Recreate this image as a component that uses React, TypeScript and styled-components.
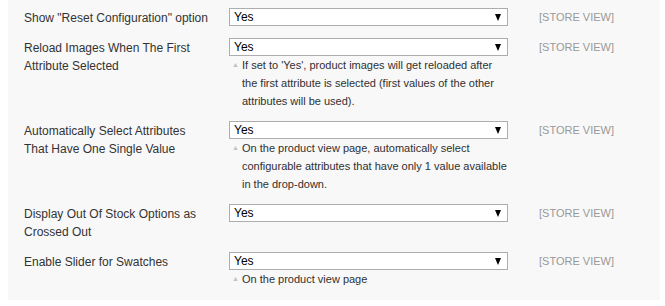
import React from 'react';
import styled, { createGlobalStyle } from 'styled-components';

const GlobalStyle = createGlobalStyle`
  html, body {
    margin: 0;
    padding: 0;
    background: #ffffff;
  }
  body {
    font-family: 'Liberation Sans', Arial, sans-serif;
  }
`;

const Panel = styled.div`
  margin-left: 8px;
  width: 652px;
  background: #f8f8f8;
  padding: 8px 0 12px 16px;
  box-sizing: border-box;
  display: flex;
  flex-direction: column;
  gap: 11px;
`;

const Row = styled.div`
  display: grid;
  grid-template-columns: 205px 279px auto;
  align-items: start;
`;

const Label = styled.div`
  font-size: 12px;
  line-height: 18px;
  color: #333333;
  padding: 1px 19px 0 0;
`;

const Field = styled.div`
  display: flex;
  flex-direction: column;
`;

const Select = styled.div`
  height: 18px;
  box-sizing: border-box;
  border: 1px solid #adadad;
  background: #ffffff;
  display: flex;
  align-items: center;
  justify-content: space-between;
  padding: 0 6px 0 4px;
  font-size: 12px;
  color: #000000;
`;

const Arrow = styled.span`
  width: 0;
  height: 0;
  border-left: 3.5px solid transparent;
  border-right: 3.5px solid transparent;
  border-top: 7px solid #000000;
`;

const Note = styled.div`
  display: flex;
  font-size: 11px;
  line-height: 18px;
  color: #303030;
  padding-left: 3px;
`;

const NoteMark = styled.span`
  flex: none;
  width: 10px;
  font-size: 7px;
  color: #c2c2c2;
`;

const NoteText = styled.span`
  flex: 1;
`;

const Scope = styled.div`
  margin-left: 31px;
  font-size: 11px;
  line-height: 18px;
  color: #999999;
`;

type Setting = {
  label: string;
  value: string;
  note?: string;
};

const settings: Setting[] = [
  { label: 'Show "Reset Configuration" option', value: 'Yes' },
  {
    label: 'Reload Images When The First Attribute Selected',
    value: 'Yes',
    note: "If set to 'Yes', product images will get reloaded after the first attribute is selected (first values of the other attributes will be used).",
  },
  {
    label: 'Automatically Select Attributes That Have One Single Value',
    value: 'Yes',
    note: 'On the product view page, automatically select configurable attributes that have only 1 value available in the drop-down.',
  },
  { label: 'Display Out Of Stock Options as Crossed Out', value: 'Yes' },
  { label: 'Enable Slider for Swatches', value: 'Yes', note: 'On the product view page' },
];

const App: React.FC = () => {
  return (
    <>
      <GlobalStyle />
      <Panel>
        {settings.map((s) => (
          <Row key={s.label}>
            <Label>{s.label}</Label>
            <Field>
              <Select>
                <span>{s.value}</span>
                <Arrow />
              </Select>
              {s.note && (
                <Note>
                  <NoteMark>▲</NoteMark>
                  <NoteText>{s.note}</NoteText>
                </Note>
              )}
            </Field>
            <Scope>[STORE VIEW]</Scope>
          </Row>
        ))}
      </Panel>
    </>
  );
};

export default App;
